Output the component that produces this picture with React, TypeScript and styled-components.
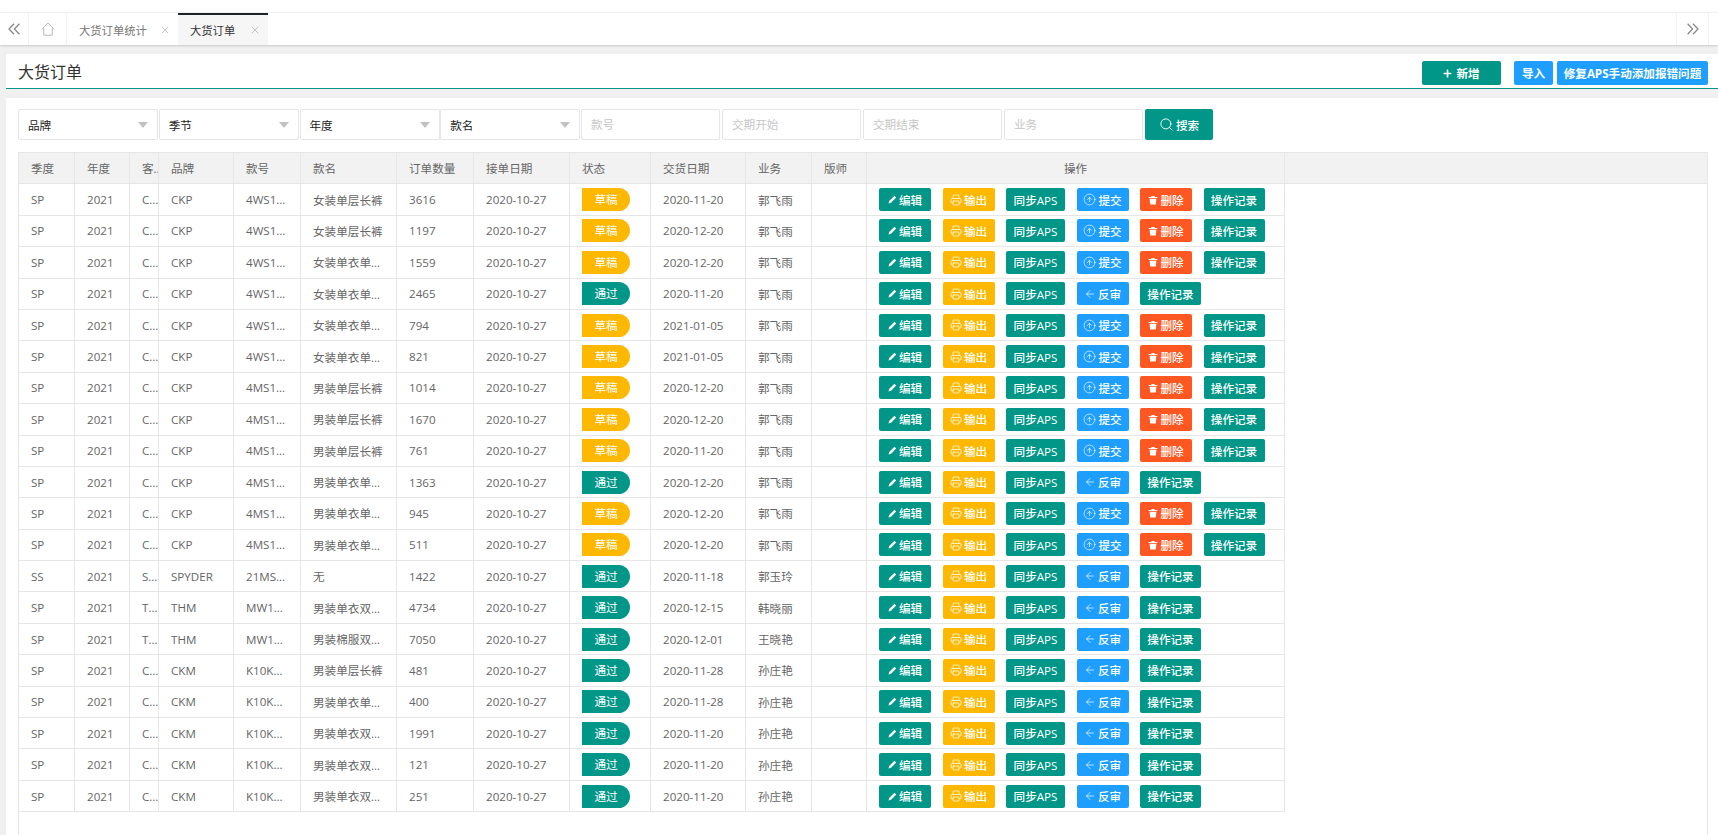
import React from 'react';
import styled, { createGlobalStyle } from 'styled-components';
import { ArrowLeft, CircleArrowUp, Printer, Search } from 'lucide-react';
import { FaPlus } from 'react-icons/fa';

const GREEN = '#009688';
const BLUE = '#1E9FFF';
const AMBER = '#FFB800';
const RED = '#FF5722';
const LINE = '#e6e6e6';

const GlobalStyle = createGlobalStyle`
  html, body {
    margin: 0;
    height: 100%;
    background: #f0f0f0;
    overflow: hidden;
  }
  body, input, button, table {
    font-family: "Open Sans", "Noto Sans CJK SC", sans-serif;
    font-size: 11.6px;
  }
`;

const Page = styled.div`
  height: 835px;
  display: flex;
  flex-direction: column;
  overflow: hidden;
`;

const TabBarTop = styled.div`
  height: 12px;
  flex: none;
  background: #fff;
  border-bottom: 1px solid #f2f2f2;
`;

const TabBar = styled.div`
  height: 32px;
  flex: none;
  display: flex;
  background: #fff;
  box-shadow: 0 1px 2px rgba(0, 0, 0, 0.16);
  position: relative;
`;

const TabSide = styled.div<{ $right?: boolean }>`
  width: ${p => (p.$right ? '31px' : '28px')};
  display: flex;
  align-items: center;
  justify-content: center;
  color: #8a8a8a;
  border-right: 1px solid #f2f2f2;
  border-left: ${p => (p.$right ? '1px solid #f2f2f2' : 'none')};
  margin-right: ${p => (p.$right ? '9px' : '0')};
  margin-left: ${p => (p.$right ? 'auto' : '0')};
`;

const HomeTab = styled.div`
  width: 37px;
  display: flex;
  align-items: center;
  justify-content: center;
  color: #b8b8b8;
  border-right: 1px solid #f2f2f2;
`;

const Tab = styled.div<{ $active?: boolean }>`
  display: flex;
  align-items: center;
  width: ${p => (p.$active ? '90px' : '111px')};
  padding-left: 12px;
  box-sizing: border-box;
  font-size: 11.3px;
  color: ${p => (p.$active ? '#333' : '#777')};
  background: ${p => (p.$active ? '#f6f6f6' : '#fff')};
  border-top: 2px solid ${p => (p.$active ? '#20222a' : 'transparent')};
  white-space: nowrap;
`;

const TabClose = styled.span`
  margin-left: auto;
  margin-right: 9px;
  color: #c4c4c4;
  display: flex;
`;

const Main = styled.div`
  flex: 1;
  margin: 9px 0 0 6px;
  display: flex;
  flex-direction: column;
  min-height: 0;
`;

const TitleBar = styled.div`
  height: 35px;
  flex: none;
  box-sizing: border-box;
  background: #fff;
  border-bottom: 1px solid ${GREEN};
  display: flex;
  align-items: flex-start;
  padding: 7px 10px 0 12px;
`;

const Title = styled.h1`
  margin: -1px 0 0;
  font-size: 16px;
  line-height: 24px;
  font-weight: 400;
  color: #333;
`;

const TitleActions = styled.div`
  margin-left: auto;
  display: flex;
`;

const HeadButton = styled.button<{ $color: string; $width: number; $gap?: number }>`
  height: 24px;
  width: ${p => p.$width}px;
  margin-left: ${p => p.$gap ?? 0}px;
  padding: 0;
  border: 0;
  border-radius: 2px;
  background: ${p => p.$color};
  color: #fff;
  font-weight: 700;
  white-space: nowrap;
  display: flex;
  align-items: center;
  justify-content: center;
  gap: 4px;
`;

const Content = styled.div`
  flex: 1;
  margin-top: 9px;
  background: #fff;
  padding: 11px 10px 0 12px;
  display: flex;
  flex-direction: column;
  min-height: 0;
`;

const FilterRow = styled.div`
  display: flex;
  height: 31px;
  flex: none;
`;

const SelectBox = styled.div`
  width: 140px;
  margin-right: 0.75px;
  box-sizing: border-box;
  border: 1px solid ${LINE};
  border-radius: 2px;
  padding: 0 9px;
  display: flex;
  align-items: center;
  justify-content: space-between;
  color: #222;
`;

const Caret = styled.span`
  width: 0;
  height: 0;
  border-top: 6px solid #c2c2c2;
  border-left: 5px solid transparent;
  border-right: 5px solid transparent;
`;

const FilterInput = styled.input`
  width: 139px;
  margin-right: 2px;
  box-sizing: border-box;
  border: 1px solid ${LINE};
  border-radius: 2px;
  padding: 0 9px;
  outline: none;
  background: #fff;
  &::placeholder {
    color: #c6c6c6;
  }
`;

const SearchButton = styled.button`
  width: 68px;
  border: 0;
  border-radius: 2px;
  background: ${GREEN};
  color: #fff;
  font-weight: 500;
  display: flex;
  align-items: center;
  justify-content: center;
  gap: 2px;
  padding: 0;
`;

const TableBox = styled.div`
  flex: 1;
  margin-top: 12px;
  box-sizing: border-box;
  border: 1px solid ${LINE};
  border-bottom: 0;
  min-height: 0;
`;

const HeadTable = styled.table`
  width: 100%;
  table-layout: fixed;
  border-collapse: separate;
  border-spacing: 0;
  background: #f2f2f2;
`;

const BodyTable = styled.table`
  width: 1266px;
  table-layout: fixed;
  border-collapse: separate;
  border-spacing: 0;
`;

const HeadCell = styled.th<{ $center?: boolean; $tight?: boolean }>`
  height: 31.4px;
  box-sizing: border-box;
  padding: 0 ${p => (p.$tight ? '0' : '12px')} 0 12px;
  border-right: 1px solid ${LINE};
  border-bottom: 1px solid ${LINE};
  font-weight: 400;
  color: #666;
  text-align: ${p => (p.$center ? 'center' : 'left')};
  overflow: hidden;
  white-space: nowrap;
  text-overflow: ellipsis;
`;

const FillCell = styled.th`
  border-bottom: 1px solid ${LINE};
`;

const BodyCell = styled.td<{ $tight?: boolean }>`
  height: 31.4px;
  box-sizing: border-box;
  padding: 0 ${p => (p.$tight ? '0' : '12px')} 0 12px;
  border-right: 1px solid ${LINE};
  border-bottom: 1px solid ${LINE};
  color: #666;
  overflow: hidden;
  white-space: nowrap;
  text-overflow: ellipsis;
`;

const StatusPill = styled.span<{ $passed: boolean }>`
  display: block;
  width: 48px;
  height: 23px;
  line-height: 23px;
  text-align: center;
  color: #fff;
  border-radius: 0 12px 12px 0;
  background: ${p => (p.$passed ? GREEN : AMBER)};
`;

const ActionRow = styled.div`
  display: flex;
  gap: 11.5px;
`;

const ActionButton = styled.button<{ $color: string; $width: number }>`
  height: 23px;
  width: ${p => p.$width}px;
  padding: 0;
  border: 0;
  border-radius: 2px;
  background: ${p => p.$color};
  color: #fff;
  white-space: nowrap;
  display: flex;
  align-items: center;
  justify-content: center;
  gap: 2px;
  flex: none;
  font-weight: 500;
`;

const WIDTHS = [56, 55, 29, 75, 67, 96, 77, 96, 81, 95, 66, 55, 418];

const HEADERS = ['季度', '年度', '客户', '品牌', '款号', '款名', '订单数量', '接单日期', '状态', '交货日期', '业务', '版师'];

type Row = {
  season: string;
  customer: string;
  brand: string;
  style: string;
  name: string;
  qty: number;
  delivery: string;
  sales: string;
  passed: boolean;
};

const ck = (brand: string, style: string, name: string, qty: number, delivery: string, sales: string, passed: boolean): Row => ({
  season: 'SP',
  customer: 'CKP',
  brand,
  style,
  name,
  qty,
  delivery,
  sales,
  passed,
});

const ROWS: Row[] = [
  ck('CKP', '4WS1001234', '女装单层长裤', 3616, '2020-11-20', '郭飞雨', false),
  ck('CKP', '4WS1001235', '女装单层长裤', 1197, '2020-12-20', '郭飞雨', false),
  ck('CKP', '4WS1001236', '女装单衣单层上衣', 1559, '2020-12-20', '郭飞雨', false),
  ck('CKP', '4WS1001237', '女装单衣单层上衣', 2465, '2020-11-20', '郭飞雨', true),
  ck('CKP', '4WS1001238', '女装单衣单层上衣', 794, '2021-01-05', '郭飞雨', false),
  ck('CKP', '4WS1001239', '女装单衣单层上衣', 821, '2021-01-05', '郭飞雨', false),
  ck('CKP', '4MS1001240', '男装单层长裤', 1014, '2020-12-20', '郭飞雨', false),
  ck('CKP', '4MS1001241', '男装单层长裤', 1670, '2020-12-20', '郭飞雨', false),
  ck('CKP', '4MS1001242', '男装单层长裤', 761, '2020-11-20', '郭飞雨', false),
  ck('CKP', '4MS1001243', '男装单衣单层上衣', 1363, '2020-12-20', '郭飞雨', true),
  ck('CKP', '4MS1001244', '男装单衣单层上衣', 945, '2020-12-20', '郭飞雨', false),
  ck('CKP', '4MS1001245', '男装单衣单层上衣', 511, '2020-12-20', '郭飞雨', false),
  { season: 'SS', customer: 'SPY', brand: 'SPYDER', style: '21MS001234', name: '无', qty: 1422, delivery: '2020-11-18', sales: '郭玉玲', passed: true },
  { ...ck('THM', 'MW10012345', '男装单衣双层上衣', 4734, '2020-12-15', '韩晓丽', true), customer: 'THM' },
  { ...ck('THM', 'MW10012346', '男装棉服双层上衣', 7050, '2020-12-01', '王晓艳', true), customer: 'THM' },
  ck('CKM', 'K10K100123', '男装单层长裤', 481, '2020-11-28', '孙庄艳', true),
  ck('CKM', 'K10K100124', '男装单衣单层上衣', 400, '2020-11-28', '孙庄艳', true),
  ck('CKM', 'K10K100125', '男装单衣双层上衣', 1991, '2020-11-20', '孙庄艳', true),
  ck('CKM', 'K10K100126', '男装单衣双层上衣', 121, '2020-11-20', '孙庄艳', true),
  ck('CKM', 'K10K100127', '男装单衣双层上衣', 251, '2020-11-20', '孙庄艳', true),
];

function DoubleChevron({ right }: { right?: boolean }) {
  return (
    <svg width="12" height="12" viewBox="0 0 12 12" fill="none" stroke="currentColor" strokeWidth="1.3">
      {right ? <path d="M.6.8 5.6 6l-5 5.2M6 .8 11 6l-5 5.2" /> : <path d="M11.4.8 6.4 6l5 5.2M6 .8 1 6l5 5.2" />}
    </svg>
  );
}

function HomeIcon() {
  return (
    <svg width="14" height="14" viewBox="0 0 14 14" fill="none" stroke="currentColor" strokeWidth="1">
      <path d="M.6 7.2 7 1l6.4 6.2M2.8 6v7.2h8.4V6" />
    </svg>
  );
}

function CloseIcon() {
  return (
    <svg width="8" height="8" viewBox="0 0 8 8" fill="none" stroke="currentColor" strokeWidth="1">
      <path d="M.8.8l6.4 6.4M7.2.8.8 7.2" />
    </svg>
  );
}

function PencilIcon() {
  return (
    <svg width="9" height="9" viewBox="0 0 9 9" fill="currentColor">
      <path d="M.5 8.5 1.2 6 6.4.8l1.8 1.8L3 7.8z" />
    </svg>
  );
}

function TrashIcon() {
  return (
    <svg width="10" height="10" viewBox="0 0 10 10" fill="currentColor">
      <path d="M3.6 1h2.8l.4 1H9.4v1H.6V2h2.6zM1.6 3.8h6.8L7.8 9.4H2.2z" />
    </svg>
  );
}

function Actions({ passed }: { passed: boolean }) {
  return (
    <ActionRow>
      <ActionButton $color={GREEN} $width={52}><PencilIcon />编辑</ActionButton>
      <ActionButton $color={AMBER} $width={52}><Printer size={12} strokeWidth={1.5} />输出</ActionButton>
      <ActionButton $color={GREEN} $width={59}>同步APS</ActionButton>
      {passed ? (
        <ActionButton $color={BLUE} $width={52}><ArrowLeft size={12} strokeWidth={1.4} />反审</ActionButton>
      ) : (
        <ActionButton $color={BLUE} $width={52}><CircleArrowUp size={13} strokeWidth={1.2} />提交</ActionButton>
      )}
      {!passed && <ActionButton $color={RED} $width={52}><TrashIcon />删除</ActionButton>}
      <ActionButton $color={GREEN} $width={61}>操作记录</ActionButton>
    </ActionRow>
  );
}

function Cols({ withFill }: { withFill?: boolean }) {
  return (
    <colgroup>
      {WIDTHS.map((w, i) => <col key={i} width={w} />)}
      {withFill && <col />}
    </colgroup>
  );
}

export default function App() {
  return (
    <>
      <GlobalStyle />
      <Page>
        <TabBarTop />
        <TabBar>
          <TabSide><DoubleChevron /></TabSide>
          <HomeTab><HomeIcon /></HomeTab>
          <Tab>大货订单统计<TabClose><CloseIcon /></TabClose></Tab>
          <Tab $active>大货订单<TabClose><CloseIcon /></TabClose></Tab>
          <TabSide $right><DoubleChevron right /></TabSide>
        </TabBar>
        <Main>
          <TitleBar>
            <Title>大货订单</Title>
            <TitleActions>
              <HeadButton $color={GREEN} $width={79}><FaPlus size={9} />新增</HeadButton>
              <HeadButton $color={BLUE} $width={39} $gap={13}>导入</HeadButton>
              <HeadButton $color={BLUE} $width={151} $gap={4}>修复APS手动添加报错问题</HeadButton>
            </TitleActions>
          </TitleBar>
          <Content>
            <FilterRow>
              <SelectBox>品牌<Caret /></SelectBox>
              <SelectBox>季节<Caret /></SelectBox>
              <SelectBox>年度<Caret /></SelectBox>
              <SelectBox>款名<Caret /></SelectBox>
              <FilterInput placeholder="款号" />
              <FilterInput placeholder="交期开始" />
              <FilterInput placeholder="交期结束" />
              <FilterInput placeholder="业务" />
              <SearchButton><Search size={15} strokeWidth={1.5} />搜索</SearchButton>
            </FilterRow>
            <TableBox>
              <HeadTable>
                <Cols withFill />
                <thead>
                  <tr>
                    {HEADERS.map((h, i) => <HeadCell key={h} $tight={i === 2}>{h}</HeadCell>)}
                    <HeadCell $center>操作</HeadCell>
                    <FillCell />
                  </tr>
                </thead>
              </HeadTable>
              <BodyTable>
                <Cols />
                <tbody>
                  {ROWS.map(r => (
                    <tr key={r.style}>
                      <BodyCell>{r.season}</BodyCell>
                      <BodyCell>2021</BodyCell>
                      <BodyCell $tight>{r.customer}</BodyCell>
                      <BodyCell>{r.brand}</BodyCell>
                      <BodyCell>{r.style}</BodyCell>
                      <BodyCell>{r.name}</BodyCell>
                      <BodyCell>{r.qty}</BodyCell>
                      <BodyCell>2020-10-27</BodyCell>
                      <BodyCell><StatusPill $passed={r.passed}>{r.passed ? '通过' : '草稿'}</StatusPill></BodyCell>
                      <BodyCell>{r.delivery}</BodyCell>
                      <BodyCell>{r.sales}</BodyCell>
                      <BodyCell />
                      <BodyCell><Actions passed={r.passed} /></BodyCell>
                    </tr>
                  ))}
                </tbody>
              </BodyTable>
            </TableBox>
          </Content>
        </Main>
      </Page>
    </>
  );
}
